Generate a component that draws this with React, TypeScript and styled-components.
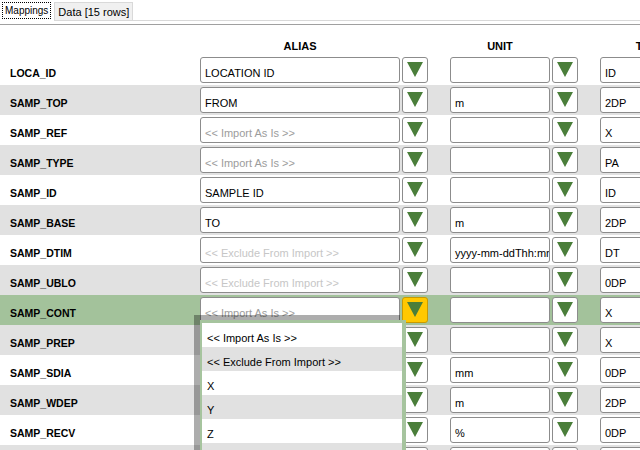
import React from "react";
import styled, { createGlobalStyle } from "styled-components";

const GlobalStyle = createGlobalStyle`
  html, body {
    margin: 0;
    padding: 0;
    background: #ffffff;
    overflow: hidden;
  }
  body {
    font-family: "Liberation Sans", Arial, sans-serif;
    font-size: 11px;
    color: #000;
  }
`;

const Page = styled.div`
  width: 640px;
  height: 450px;
  overflow: hidden;
  background: #fff;
`;

const TabBar = styled.div`
  display: flex;
  align-items: flex-end;
  height: 20px;
  border-bottom: 1px solid #d9d9d9;
`;

const Tab = styled.div<{ $active?: boolean }>`
  box-sizing: border-box;
  flex-shrink: 0;
  ${(p) =>
    p.$active
      ? `
    height: 21px;
    margin-bottom: -1px;
    padding: 2px 3px 0 2px;
    background: #fff;
    align-self: flex-start;
  `
      : `
    height: 18px;
    padding: 2px 3px 0 3px;
    background: #f0f0f0;
    border: 1px solid #d9d9d9;
    border-bottom: none;
    line-height: 15px;
  `}
`;

const FocusLabel = styled.span`
  display: block;
  box-sizing: border-box;
  height: 17px;
  padding: 0 2px;
  border: 1px dotted #000;
  font-size: 10px;
  line-height: 15px;
`;

const Divider = styled.div`
  margin-top: 3px;
  height: 1px;
  background: #a0a0a0;
`;

const Row = styled.div<{ $tone: "white" | "gray" | "active" }>`
  display: flex;
  align-items: center;
  gap: 22px;
  height: 30px;
  flex-shrink: 0;
  background: ${(p) =>
    p.$tone === "active" ? "#a3c29b" : p.$tone === "gray" ? "#e1e1e1" : "#ffffff"};
`;

const HeaderRow = styled.div`
  display: flex;
  gap: 22px;
  height: 30px;
`;

const HeaderCell = styled.div<{ $w: number }>`
  width: ${(p) => p.$w}px;
  flex-shrink: 0;
  box-sizing: border-box;
  padding-top: 14px;
  line-height: 14px;
  font-weight: bold;
  text-align: center;
  white-space: nowrap;
`;

const HeaderGroup = styled.div`
  display: flex;
  gap: 2px;
  flex-shrink: 0;
`;

const Spacer = styled.div<{ $w: number }>`
  width: ${(p) => p.$w}px;
  flex-shrink: 0;
`;

const Label = styled.div`
  width: 178px;
  flex-shrink: 0;
  align-self: flex-start;
  box-sizing: border-box;
  padding: 11px 0 0 10px;
  line-height: 14px;
  font-weight: bold;
  font-size: 10.5px;
  white-space: nowrap;
`;

const Field = styled.div`
  position: relative;
  display: flex;
  gap: 2px;
  flex-shrink: 0;
`;

const Box = styled.div<{ $w: number; $hint?: "import" | "exclude" }>`
  box-sizing: border-box;
  width: ${(p) => p.$w}px;
  height: 26px;
  padding: 8px 4px 0 4px;
  line-height: 14px;
  border: 1px solid #8c8c8c;
  border-radius: 3px;
  background: #fff;
  white-space: nowrap;
  overflow: hidden;
  color: ${(p) =>
    p.$hint === "import" ? "#9c9c9c" : p.$hint === "exclude" ? "#c6c6c6" : "#000"};
`;

const DropButton = styled.div<{ $active?: boolean }>`
  box-sizing: border-box;
  width: 26px;
  height: 26px;
  display: flex;
  align-items: center;
  justify-content: center;
  padding-bottom: 2px;
  border: 1px solid ${(p) => (p.$active ? "#c99a00" : "#8c8c8c")};
  border-radius: 3px;
  background: ${(p) => (p.$active ? "#ffc800" : "#fff")};
`;

const Popup = styled.div`
  position: absolute;
  left: 0;
  top: 23px;
  width: 206px;
  box-sizing: border-box;
  border: 2px solid #a6c49e;
  border-top-width: 3px;
  border-right-width: 4px;
  background: #fff;
  box-shadow: -6px -5px 0 rgba(0, 0, 0, 0.32);
  z-index: 10;
`;

const PopupItem = styled.div<{ $gray?: boolean }>`
  box-sizing: border-box;
  height: 24px;
  padding: 8px 5px 0 5px;
  line-height: 14px;
  white-space: nowrap;
  background: ${(p) => (p.$gray ? "#e1e1e1" : "#fff")};
`;

const Arrow = () => (
  <svg width="16" height="15" viewBox="0 0 16 15">
    <polygon points="0,0 16,0 8,15" fill="#4a7e3a" />
  </svg>
);

const IMPORT = "<< Import As Is >>";
const EXCLUDE = "<< Exclude From Import >>";

type RowData = { name: string; alias: string; unit: string; type: string };

const rows: RowData[] = [
  { name: "LOCA_ID", alias: "LOCATION ID", unit: "", type: "ID" },
  { name: "SAMP_TOP", alias: "FROM", unit: "m", type: "2DP" },
  { name: "SAMP_REF", alias: IMPORT, unit: "", type: "X" },
  { name: "SAMP_TYPE", alias: IMPORT, unit: "", type: "PA" },
  { name: "SAMP_ID", alias: "SAMPLE ID", unit: "", type: "ID" },
  { name: "SAMP_BASE", alias: "TO", unit: "m", type: "2DP" },
  { name: "SAMP_DTIM", alias: EXCLUDE, unit: "yyyy-mm-ddThh:mm", type: "DT" },
  { name: "SAMP_UBLO", alias: EXCLUDE, unit: "", type: "0DP" },
  { name: "SAMP_CONT", alias: IMPORT, unit: "", type: "X" },
  { name: "SAMP_PREP", alias: IMPORT, unit: "", type: "X" },
  { name: "SAMP_SDIA", alias: IMPORT, unit: "mm", type: "0DP" },
  { name: "SAMP_WDEP", alias: IMPORT, unit: "m", type: "2DP" },
  { name: "SAMP_RECV", alias: IMPORT, unit: "%", type: "0DP" },
  { name: "SAMP_TECH", alias: IMPORT, unit: "", type: "X" },
];

const ACTIVE = 8;

const popupItems = [IMPORT, EXCLUDE, "X", "Y", "Z", "ID", "2DP"];

const hintOf = (v: string): "import" | "exclude" | undefined =>
  v === IMPORT ? "import" : v === EXCLUDE ? "exclude" : undefined;

export default function App() {
  return (
    <Page>
      <GlobalStyle />
      <TabBar>
        <Tab $active>
          <FocusLabel>Mappings</FocusLabel>
        </Tab>
        <Tab>Data [15 rows]</Tab>
      </TabBar>
      <Divider />
      <HeaderRow>
        <Spacer $w={178} />
        <HeaderGroup>
          <HeaderCell $w={200}>ALIAS</HeaderCell>
          <Spacer $w={26} />
        </HeaderGroup>
        <HeaderGroup>
          <HeaderCell $w={100}>UNIT</HeaderCell>
          <Spacer $w={26} />
        </HeaderGroup>
        <HeaderGroup>
          <HeaderCell $w={100}>TYPE</HeaderCell>
        </HeaderGroup>
      </HeaderRow>
      {rows.map((r, i) => {
        const active = i === ACTIVE;
        const tone = active ? "active" : i % 2 === 1 ? "gray" : "white";
        return (
          <Row key={r.name} $tone={tone}>
            <Label>{r.name}</Label>
            <Field>
              <Box $w={200} $hint={hintOf(r.alias)}>
                {r.alias}
              </Box>
              <DropButton $active={active}>
                <Arrow />
              </DropButton>
              {active && (
                <Popup>
                  {popupItems.map((item, k) => (
                    <PopupItem key={item} $gray={k % 2 === 1}>
                      {item}
                    </PopupItem>
                  ))}
                </Popup>
              )}
            </Field>
            <Field>
              <Box $w={100}>{r.unit}</Box>
              <DropButton>
                <Arrow />
              </DropButton>
            </Field>
            <Field>
              <Box $w={100}>{r.type}</Box>
              <DropButton>
                <Arrow />
              </DropButton>
            </Field>
          </Row>
        );
      })}
    </Page>
  );
}
